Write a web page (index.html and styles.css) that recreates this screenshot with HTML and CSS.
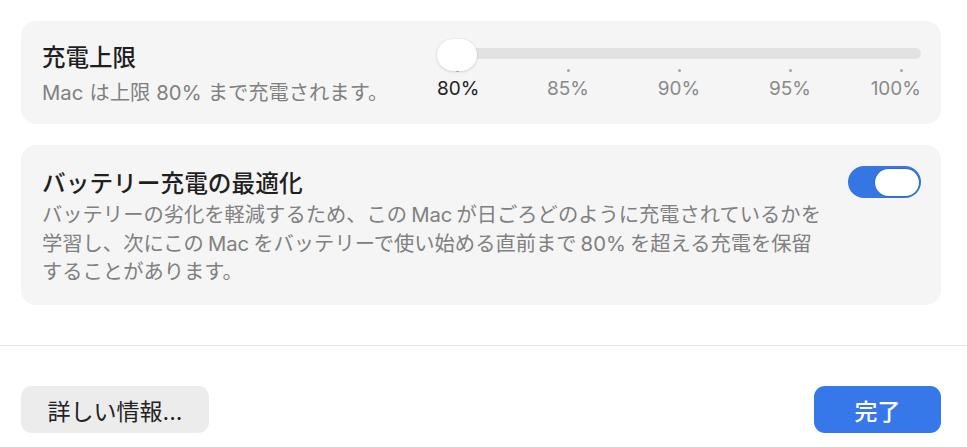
FILE: index.html
```html
<!DOCTYPE html>
<html lang="ja">
<head>
<meta charset="utf-8">
<title>バッテリー</title>
<link rel="stylesheet" href="styles.css">
</head>
<body>
<div class="main">
  <section class="card card-limit">
    <div class="text">
      <div class="title">充電上限</div>
      <div class="sub"><span class="lat lead">Mac</span>は上限<span class="lat">80%</span>まで充電されます。</div>
    </div>
    <div class="slider">
      <div class="track"><div class="knob"></div></div>
      <div class="ticks"><i></i><i></i><i></i><i></i><i></i></div>
      <div class="labels">
        <span class="lbl first cur">80%</span>
        <span class="lbl">85%</span>
        <span class="lbl">90%</span>
        <span class="lbl">95%</span>
        <span class="lbl last">100%</span>
      </div>
    </div>
  </section>
  <section class="card card-opt">
    <div class="text">
      <div class="title title-wide">バッテリー充電の最適化</div>
      <div class="desc">バッテリーの劣化を軽減するため、この<span class="lat">Mac</span>が日ごろどのように充電されているかを<br>学習し、次にこの<span class="lat">Mac</span>をバッテリーで使い始める直前まで<span class="lat">80%</span>を超える充電を保留<br>することがあります。</div>
    </div>
    <div class="toggle"><div class="toggle-knob"></div></div>
  </section>
</div>
<div class="divider"></div>
<footer class="footer">
  <button class="btn btn-gray">詳しい情報...</button>
  <button class="btn btn-blue">完了</button>
</footer>
</body>
</html>
```
FILE: styles.css
```css
html, body {
  margin: 0;
  padding: 0;
  background: #ffffff;
}
body {
  font-family: Inter, "Noto Sans CJK JP", sans-serif;
  color: #222222;
  width: 967px;
  height: 447px;
  overflow: hidden;
}
.main {
  padding: 21px 26px 0 21px;
  display: flex;
  flex-direction: column;
  gap: 21px;
}
.card {
  background: #f5f5f5;
  border-radius: 15px;
  display: flex;
  align-items: flex-start;
  justify-content: space-between;
  padding: 22px 20px 16px 21px;
}
.title {
  font-size: 23.5px;
  line-height: 30px;
  font-weight: 500;
  color: #1f1f1f;
  white-space: nowrap;
}
.title-wide {
  font-size: 23.7px;
}
.sub {
  margin-top: 5px;
  font-size: 20.3px;
  line-height: 30px;
  color: #808080;
  white-space: nowrap;
}
.lat {
  margin: 0 0.2em;
}
.sub .lat {
  margin: 0 0.3em;
}
.sub .lat.lead {
  margin-left: 0;
}
.slider {
  width: 484px;
  position: relative;
}
.track {
  position: relative;
  margin-top: 5px;
  height: 11px;
  border-radius: 6px;
  background: #e2e2e2;
}
.knob {
  position: absolute;
  left: 0;
  top: -9px;
  width: 40px;
  height: 32px;
  border-radius: 16px;
  background: #ffffff;
  box-shadow: 0 1px 3px rgba(0, 0, 0, 0.12), 0 0 0 0.5px rgba(0, 0, 0, 0.05);
}
.ticks {
  display: flex;
  justify-content: space-between;
  padding: 0 18.5px;
  margin-top: 10px;
  height: 3px;
}
.ticks i {
  width: 3px;
  height: 3px;
  border-radius: 50%;
  background: #a6a6a6;
}
.labels {
  display: grid;
  grid-template-columns: 1fr 111px 111px 111px 1fr;
  margin-top: 5px;
  font-size: 19px;
  line-height: 24px;
  color: #8a8a8a;
}
.lbl {
  text-align: center;
  white-space: nowrap;
}
.lbl.first {
  justify-self: start;
}
.lbl.last {
  justify-self: end;
}
.lbl.cur {
  color: #222222;
}
.card-opt {
  padding: 24px 20px 18px 21px;
}
.desc {
  margin-top: 2px;
  font-size: 20.3px;
  line-height: 28.5px;
  color: #808080;
  white-space: nowrap;
}
.toggle {
  margin-top: -3px;
  width: 73px;
  height: 32px;
  border-radius: 16px;
  background: #3576e3;
  display: flex;
  justify-content: flex-end;
  align-items: center;
  padding: 0 2px;
  box-sizing: border-box;
}
.toggle-knob {
  width: 44px;
  height: 27px;
  border-radius: 14px;
  background: #ffffff;
  box-shadow: 0 0 0 0.5px rgba(0, 0, 0, 0.2);
}
.divider {
  margin-top: 40px;
  height: 1.5px;
  background: #e6e6e6;
}
.footer {
  display: flex;
  justify-content: space-between;
  padding: 40px 26px 0 21px;
}
.btn {
  border: none;
  font-family: Inter, "Noto Sans CJK JP", sans-serif;
  font-size: 23px;
  font-weight: 400;
  height: 47px;
  border-radius: 11px;
  padding: 0;
  display: flex;
  align-items: center;
  justify-content: center;
}
.btn-gray {
  width: 188px;
  background: #ececec;
  color: #222222;
}
.btn-blue {
  width: 127px;
  background: #3677ea;
  color: #ffffff;
  font-weight: 500;
}
```
